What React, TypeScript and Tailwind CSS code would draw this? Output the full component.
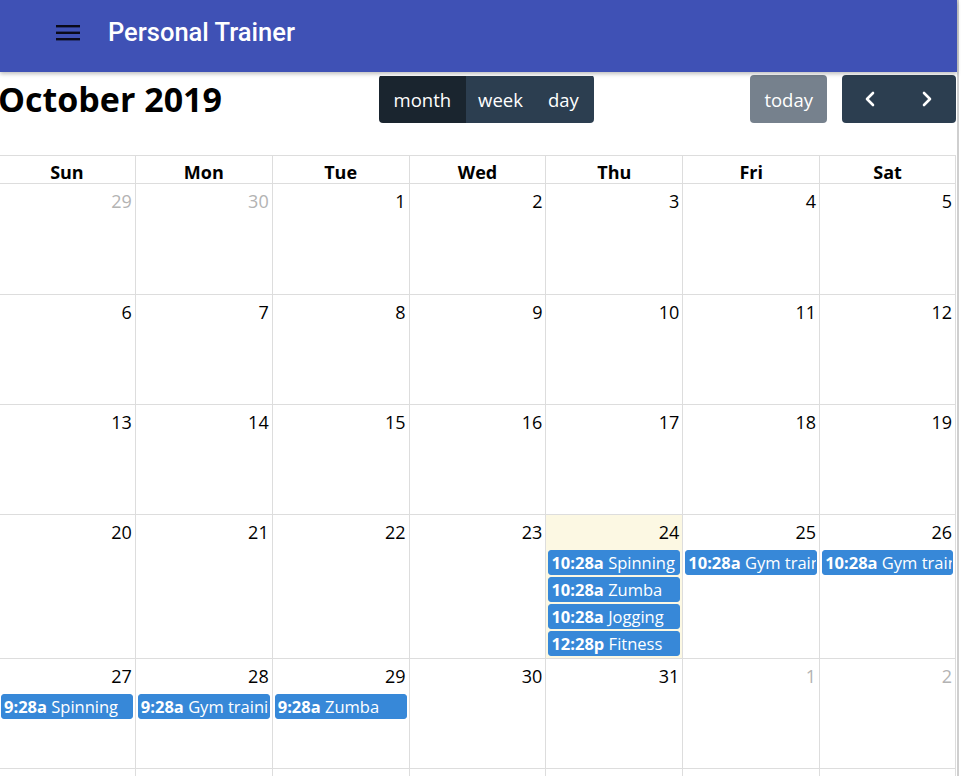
import React from "react";

type Ev = { time: string; title: string };
type Day = { n: number; other?: boolean; today?: boolean; events?: Ev[] };

const WEEKDAYS = ["Sun", "Mon", "Tue", "Wed", "Thu", "Fri", "Sat"];

const WEEKS: Day[][] = [
  [{ n: 29, other: true }, { n: 30, other: true }, { n: 1 }, { n: 2 }, { n: 3 }, { n: 4 }, { n: 5 }],
  [{ n: 6 }, { n: 7 }, { n: 8 }, { n: 9 }, { n: 10 }, { n: 11 }, { n: 12 }],
  [{ n: 13 }, { n: 14 }, { n: 15 }, { n: 16 }, { n: 17 }, { n: 18 }, { n: 19 }],
  [
    { n: 20 },
    { n: 21 },
    { n: 22 },
    { n: 23 },
    {
      n: 24,
      today: true,
      events: [
        { time: "10:28a", title: "Spinning" },
        { time: "10:28a", title: "Zumba" },
        { time: "10:28a", title: "Jogging" },
        { time: "12:28p", title: "Fitness" },
      ],
    },
    { n: 25, events: [{ time: "10:28a", title: "Gym training" }] },
    { n: 26, events: [{ time: "10:28a", title: "Gym training" }] },
  ],
  [
    { n: 27, events: [{ time: "9:28a", title: "Spinning" }] },
    { n: 28, events: [{ time: "9:28a", title: "Gym training" }] },
    { n: 29, events: [{ time: "9:28a", title: "Zumba" }] },
    { n: 30 },
    { n: 31 },
    { n: 1, other: true },
    { n: 2, other: true },
  ],
  [3, 4, 5, 6, 7, 8, 9].map((n) => ({ n, other: true })),
];

const calFont = { fontFamily: '"Open Sans", "Noto Sans", sans-serif' };

function Chevron({ dir }: { dir: "left" | "right" }) {
  return (
    <svg width="14" height="16" viewBox="0 0 14 16" fill="none">
      <path
        d={dir === "left" ? "M10 2 L4 8 L10 14" : "M4 2 L10 8 L4 14"}
        stroke="white"
        strokeWidth="2.6"
        strokeLinecap="round"
        strokeLinejoin="round"
      />
    </svg>
  );
}

export default function App() {
  return (
    <div className="flex h-[776px] w-[961px] overflow-hidden bg-white">
      <div className="flex w-[957px] shrink-0 flex-col">
        {/* app bar */}
        <header className="relative z-10 flex h-[72px] shrink-0 items-center bg-[#3f51b5] pb-[7px] pl-[56px] shadow-[0_2px_4px_rgba(0,0,0,0.25)]">
          <svg width="24" height="16" viewBox="0 0 24 16">
            <rect x="0" y="0" width="24" height="2.4" fill="#0a0a1a" />
            <rect x="0" y="6.6" width="24" height="2.4" fill="#0a0a1a" />
            <rect x="0" y="13" width="24" height="2.4" fill="#0a0a1a" />
          </svg>
          <h1
            className="ml-[28px] text-[25.5px] font-medium leading-none text-white"
            style={{ fontFamily: "Roboto, sans-serif" }}
          >
            Personal Trainer
          </h1>
        </header>

        <div className="-ml-[2px] w-[958px]" style={calFont}>
          {/* toolbar */}
          <div className="flex items-center justify-between pt-[3px]">
            <h2 className="text-[34px] font-bold leading-none text-black">October 2019</h2>
            <div className="flex h-[48px] overflow-hidden rounded-[4px] pt-[1px] text-[18.5px] text-white">
              <button className="bg-[#1a252f] px-[15px]">month</button>
              <button className="bg-[#2c3e50] px-[12px]">week</button>
              <button className="bg-[#2c3e50] pl-[13px] pr-[15px]">day</button>
            </div>
            <div className="flex items-center">
              <button className="h-[48px] rounded-[4px] bg-[#76818d] px-[14px] pt-[1px] text-[18.5px] text-white">
                today
              </button>
              <div className="ml-[15px] flex h-[48px] overflow-hidden rounded-[4px] bg-[#2c3e50]">
                <button className="flex w-[57px] items-center justify-center">
                  <Chevron dir="left" />
                </button>
                <button className="flex w-[57px] items-center justify-center">
                  <Chevron dir="right" />
                </button>
              </div>
            </div>
          </div>

          {/* grid */}
          <div className="mt-[32px]">
            <div className="grid h-[28px] grid-cols-7 border-t border-[#ddd]">
              {WEEKDAYS.map((d, i) => (
                <div
                  key={d}
                  className={`flex items-center justify-center border-l border-[#ddd] pt-[3px] text-[18px] font-bold text-black ${
                    i === 6 ? "border-r" : ""
                  }`}
                >
                  {d}
                </div>
              ))}
            </div>
            {WEEKS.map((week, wi) => (
              <div
                key={wi}
                className={`grid grid-cols-7 border-t border-[#ddd] ${wi === 0 ? "min-h-[111px]" : "min-h-[110px]"}`}
              >
                {week.map((day, di) => (
                  <div
                    key={di}
                    className={`min-w-0 border-l border-[#ddd] pb-[2px] ${di === 6 ? "border-r" : ""} ${
                      day.today ? "bg-[#fcf8e3]" : ""
                    }`}
                  >
                    <div
                      className={`h-[33px] pr-[3px] pt-[4px] text-right text-[18px] leading-[27px] ${
                        day.other ? "text-[#b3b3b3]" : "text-black"
                      }`}
                    >
                      {day.n}
                    </div>
                    {day.events?.map((ev, ei) => (
                      <div
                        key={ei}
                        className="mx-[2px] mt-[2px] h-[25px] overflow-hidden whitespace-nowrap rounded-[3px] border border-[#3788d8] bg-[#3788d8] pl-[2px] text-[16.5px] leading-[23px] text-white"
                      >
                        <span className="font-bold">{ev.time}</span> {ev.title}
                      </div>
                    ))}
                  </div>
                ))}
              </div>
            ))}
          </div>
        </div>
      </div>
      <div className="h-full w-[2px] shrink-0 bg-[#cfcfcf]" />
    </div>
  );
}
